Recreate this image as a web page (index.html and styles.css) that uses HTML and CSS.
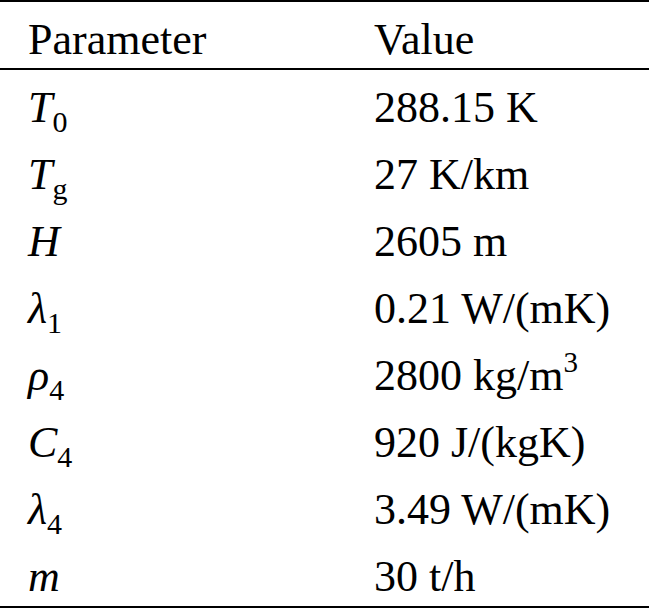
FILE: index.html
```html
<!DOCTYPE html>
<html lang="en">

<head>
    <meta charset="UTF-8">
    <meta name="viewport" content="width=device-width, initial-scale=1.0">
    <title>Parameters</title>

    <link rel="stylesheet" href="styles.css">
</head>

<body>
    <table class="paramTable">
        <thead>
            <tr>
                <th>Parameter</th>
                <th>Value</th>
            </tr>
        </thead>
        <tbody>
            <tr>
                <td><i>T</i><sub>0</sub></td>
                <td>288.15 K</td>
            </tr>
            <tr>
                <td><i>T</i><sub>g</sub></td>
                <td>27 K/km</td>
            </tr>
            <tr>
                <td><i>H</i></td>
                <td>2605 m</td>
            </tr>
            <tr>
                <td><i>λ</i><sub>1</sub></td>
                <td>0.21 W/(mK)</td>
            </tr>
            <tr>
                <td><i>ρ</i><sub>4</sub></td>
                <td>2800 kg/m<sup>3</sup></td>
            </tr>
            <tr>
                <td><i>C</i><sub>4</sub></td>
                <td>920 J/(kgK)</td>
            </tr>
            <tr>
                <td><i>λ</i><sub>4</sub></td>
                <td>3.49 W/(mK)</td>
            </tr>
            <tr>
                <td><i>m</i></td>
                <td>30 t/h</td>
            </tr>
        </tbody>
    </table>
</body>

</html>
```

FILE: styles.css
```css
* {
    box-sizing: border-box;
}

body {
    margin: 0;
    background-color: #fff;
    color: #000;
    font-family: "Liberation Serif", "Times New Roman", serif;
}

.paramTable {
    width: 649px;
    border-collapse: separate;
    border-spacing: 0;
    font-size: 44px;
}

.paramTable th,
.paramTable td {
    padding: 9px 0 0;
    line-height: 58px;
    text-align: left;
    font-weight: normal;
    vertical-align: top;
    white-space: nowrap;
}

.paramTable th {
    line-height: 57px;
    border-top: 2px solid #000;
    border-bottom: 2px solid #000;
}

.paramTable th:first-child,
.paramTable td:first-child {
    width: 374px;
    padding-left: 28px;
}

.paramTable tbody tr:last-child td {
    border-bottom: 2px solid #000;
}

sub {
    font-size: 30px;
    line-height: 0;
    vertical-align: -10px;
}

sup {
    font-size: 29px;
    line-height: 0;
    vertical-align: 18px;
}
```
